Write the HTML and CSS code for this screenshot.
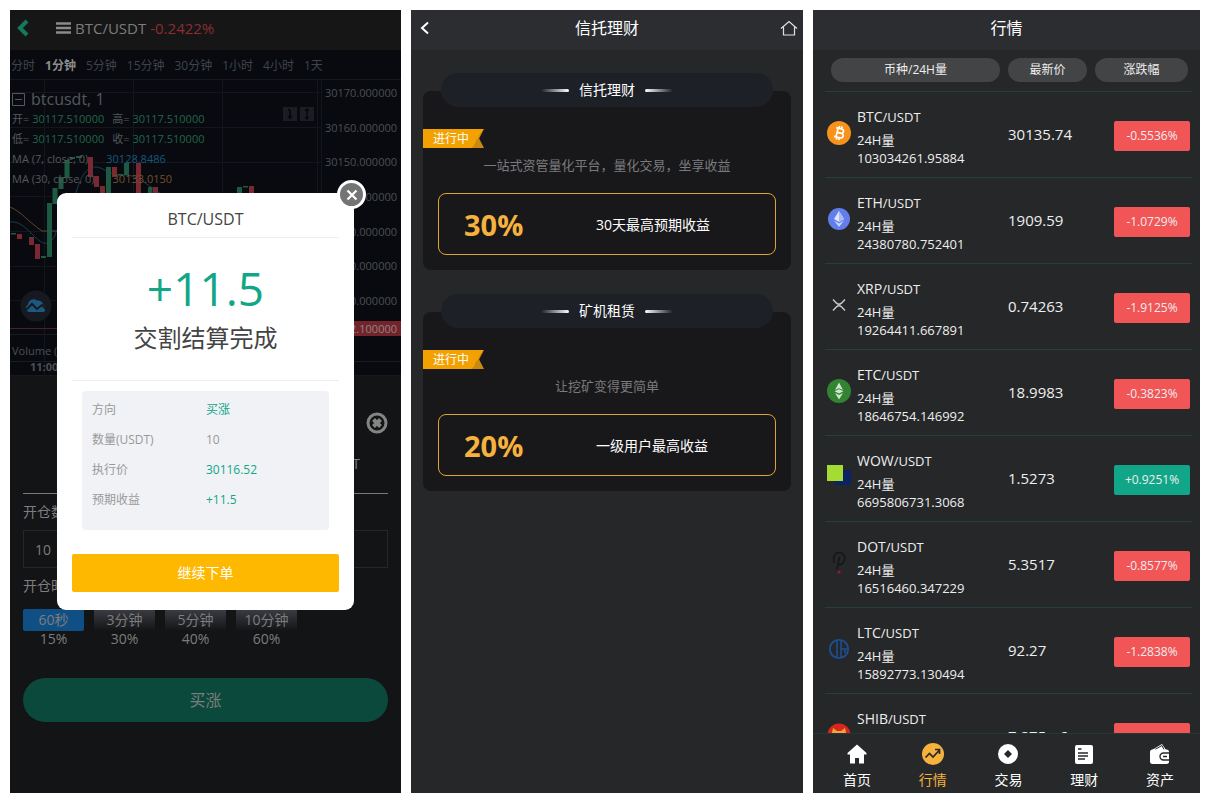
FILE: index.html
```
<!DOCTYPE html>
<html lang="zh-CN">
<head>
    <meta charset="UTF-8">
    <meta name="viewport" content="width=device-width, initial-scale=1.0">
    <title>行情</title>
    <link rel="stylesheet" href="styles.css">
</head>
<body>

    <main class="screens">

        <!-- Trade screen -->
        <section class="screen trade">
            <header class="trade-header">
                <button type="button" class="icon-button" aria-label="返回">
                    <svg width="14" height="18" viewBox="0 0 14 18"><path d="M11 2 4 9l7 7" fill="none" stroke="#137a5c" stroke-width="4"/></svg>
                </button>
                <button type="button" class="pair-button">
                    <svg width="15" height="12" viewBox="0 0 15 12"><path d="M0 1.5h15M0 6h15M0 10.5h15" stroke="#8b8b8b" stroke-width="2.6"/></svg>
                    <span>BTC/USDT</span>
                </button>
                <span class="change">-0.2422%</span>
            </header>

            <nav class="periods">
                <button type="button">分时</button>
                <button type="button" class="active">1分钟</button>
                <button type="button">5分钟</button>
                <button type="button">15分钟</button>
                <button type="button">30分钟</button>
                <button type="button">1小时</button>
                <button type="button">4小时</button>
                <button type="button">1天</button>
            </nav>

            <div class="chart">
                <svg class="chart-plot" viewBox="0 0 391 295" preserveAspectRatio="none">
                    <path d="M34.500 0V295M123.500 0V295M212.500 0V295M307.500 0V295M311.500 0V295M0 12.500H311M0 47.500H311M0 82.500H311M0 116.500H311M0 151.500H311M0 186.500H311M0 220.500H311" stroke="#14161d" fill="none"/>
                    <path d="M0 254.500H391M0 281.500H391" stroke="#191b21" fill="none"/>
                    <path d="M0 248.500H311" stroke="#4a1f25"/>
                    <path d="M0 127C12 132 16 140 32 151H50" fill="none" stroke="#5d472b"/>
                    <path d="M0 142c8-1 14 4 21 11s14 14 20 8 4-9 6-11M66 113c6-22 13-26 20-26s15 9 28 8c14 0 20 8 36 18" fill="none" stroke="#1b3d50"/>
                    <g fill="#1c5a41">
                        <rect x="1" y="153" width="5" height="1.500"/>
                        <rect x="19" y="157" width="5" height="1.500"/>
                        <rect x="31" y="176" width="5" height="2"/>
                        <rect x="37" y="123" width="5" height="54"/>
                        <rect x="42.500" y="108" width="5" height="16"/>
                        <rect x="48.500" y="97" width="5" height="12"/>
                        <rect x="54.500" y="80" width="5" height="18"/>
                        <rect x="60" y="77" width="5" height="2"/>
                        <rect x="66" y="76" width="6" height="2"/>
                        <rect x="96" y="87" width="5" height="27"/>
                        <rect x="108" y="94" width="5" height="1.500"/>
                        <rect x="114" y="83" width="5" height="12"/>
                        <rect x="138" y="107" width="4.500" height="7"/>
                        <rect x="227" y="107" width="5" height="7"/>
                        <rect x="233" y="106" width="5" height="1.500"/>
                    </g>
                    <g fill="#7a2831">
                        <rect x="7" y="154" width="5" height="5"/>
                        <rect x="19" y="158" width="5" height="7"/>
                        <rect x="25" y="164" width="5" height="15"/>
                        <rect x="78" y="77" width="5" height="20"/>
                        <rect x="84" y="96" width="5" height="11"/>
                        <rect x="90" y="106" width="5" height="8"/>
                        <rect x="102" y="87" width="5" height="10"/>
                        <rect x="126" y="83" width="5" height="31"/>
                        <rect x="143" y="107" width="5" height="7"/>
                        <rect x="239" y="106" width="5" height="8"/>
                    </g>
                </svg>

                <div class="legend">
                    <div class="legend-title">
                        <svg width="13" height="13" viewBox="0 0 13 13"><path d="M.5.5h12v12H.5zM3 6.500h7" fill="none" stroke="#55585c"/></svg>
                        <span>btcusdt, 1</span>
                    </div>
                    <div class="legend-row"><span>开= <b>30117.510000</b></span><span>高= <b>30117.510000</b></span></div>
                    <div class="legend-row"><span>低= <b>30117.510000</b></span><span>收= <b>30117.510000</b></span></div>
                    <div class="legend-row study"><span>MA (7, close, 0)</span><span class="ma-blue">30128.8486</span></div>
                    <div class="legend-row study"><span>MA (30, close, 0)</span><span class="ma-orange">30133.0150</span></div>
                </div>

                <div class="chart-tools">
                    <svg width="14" height="14" viewBox="0 0 14 14"><rect width="14" height="14" fill="#1b1d22"/><path d="M7 3v8M5 9l2 2 2-2M5 3h2" stroke="#07090e" stroke-width="2" fill="none"/></svg>
                    <svg width="14" height="14" viewBox="0 0 14 14"><rect width="14" height="14" fill="#1b1d22"/><path d="M7 2v10M5 4l2-2 2 2M5 10l2 2 2-2" stroke="#07090e" stroke-width="1.500" fill="none"/></svg>
                </div>

                <div class="price-axis">
                    <span>30170.000000</span>
                    <span>30160.000000</span>
                    <span>30150.000000</span>
                    <span>30140.000000</span>
                    <span>30130.000000</span>
                    <span>30120.000000</span>
                    <span>30110.000000</span>
                    <span class="last-price">30102.100000</span>
                </div>

                <svg class="chart-logo" width="32" height="32" viewBox="0 0 32 32">
                    <circle cx="16" cy="16" r="15.500" fill="#16191f"/>
                    <path d="M9 22a4 4 0 0 1-1-7.500 5.500 5.500 0 0 1 9-4 6 6 0 0 1 6.500 4.500A4 4 0 0 1 24 22z" fill="#1d5880"/>
                    <path d="m6 20 6-6 5 5 5-4 5 5" fill="none" stroke="#16191f" stroke-width="2"/>
                </svg>

                <div class="chart-foot">
                    <span>Volume (20)</span>
                    <time>11:00</time>
                </div>
            </div>

            <form class="order">
                <div class="order-top">
                    <button type="button" class="icon-button" aria-label="取消">
                        <svg width="22" height="22" viewBox="0 0 22 22"><circle cx="11" cy="11" r="9" fill="none" stroke="#848484" stroke-width="3"/><path d="m7.500 7.500 7 7m0-7-7 7" stroke="#848484" stroke-width="4"/></svg>
                    </button>
                </div>
                <p class="balance">余额: 0.00 USDT</p>
                <label for="amount">开仓数量</label>
                <input type="text" id="amount" value="10">
                <p class="field-label">开仓时间</p>
                <div class="durations">
                    <div class="duration active"><button type="button">60秒</button><span>15%</span></div>
                    <div class="duration"><button type="button">3分钟</button><span>30%</span></div>
                    <div class="duration"><button type="button">5分钟</button><span>40%</span></div>
                    <div class="duration"><button type="button">10分钟</button><span>60%</span></div>
                </div>
                <button type="submit" class="buy-button">买涨</button>
            </form>

            <div class="modal" role="dialog" aria-labelledby="modal-title">
                <button type="button" class="modal-close" aria-label="关闭">
                    <svg width="12" height="12" viewBox="0 0 12 12"><path d="m1.500 1.500 9 9m0-9-9 9" stroke="#fff" stroke-width="2.200"/></svg>
                </button>
                <h2 id="modal-title">BTC/USDT</h2>
                <div class="result">
                    <strong>+11.5</strong>
                    <p>交割结算完成</p>
                </div>
                <dl class="details">
                    <dt>方向</dt><dd class="up">买涨</dd>
                    <dt>数量(USDT)</dt><dd>10</dd>
                    <dt>执行价</dt><dd class="up">30116.52</dd>
                    <dt>预期收益</dt><dd class="up">+11.5</dd>
                </dl>
                <button type="button" class="continue-button">继续下单</button>
            </div>
        </section>

        <!-- Finance screen -->
        <section class="screen finance">
            <header class="title-bar">
                <button type="button" class="icon-button" aria-label="返回">
                    <svg width="10" height="14" viewBox="0 0 10 14"><path d="M8 1.500 2 7l6 5.500" fill="none" stroke="#fff" stroke-width="2"/></svg>
                </button>
                <h1>信托理财</h1>
                <a href="#" class="home-link" aria-label="首页">
                    <svg width="18" height="16" viewBox="0 0 18 16"><path d="M1 8.500 9 1.500l8 7M3.500 7v8h11V7" fill="none" stroke="#e2e2e2" stroke-width="1.200"/></svg>
                </a>
            </header>
            <div class="plans">
                <article class="plan">
                    <h2>信托理财</h2>
                    <div class="plan-body">
                        <span class="badge">进行中</span>
                        <p class="plan-text">一站式资管量化平台，量化交易，坐享收益</p>
                        <div class="rate"><strong>30%</strong><span>30天最高预期收益</span></div>
                    </div>
                </article>
                <article class="plan">
                    <h2>矿机租赁</h2>
                    <div class="plan-body">
                        <span class="badge">进行中</span>
                        <p class="plan-text">让挖矿变得更简单</p>
                        <div class="rate"><strong>20%</strong><span>一级用户最高收益</span></div>
                    </div>
                </article>
            </div>
        </section>

        <!-- Market screen -->
        <section class="screen market">
            <header class="title-bar">
                <h1>行情</h1>
            </header>
            <div class="market-list">
                <table>
                    <colgroup>
                        <col class="col-pair">
                        <col class="col-price">
                        <col class="col-change">
                    </colgroup>
                    <thead>
                        <tr>
                            <th><span>币种/24H量</span></th>
                            <th><span>最新价</span></th>
                            <th><span>涨跌幅</span></th>
                        </tr>
                    </thead>
                    <tbody>
                        <tr>
                            <td><div class="pair">
                                <svg width="24" height="24" viewBox="0 0 24 24"><circle cx="12" cy="12" r="12" fill="#f7931a"/><path d="M8 7.500h5.500c3.300 0 3.300 4.300 0 4.300H10.500h3.500c3.700 0 3.700 4.700 0 4.700H8M10 7.500v9M11 5v2.500M13.500 5v2.500M11 16.500V19M13.500 16.500V19" transform="rotate(14 12 12)" fill="none" stroke="#fff" stroke-width="1.700"/></svg>
                                <div><h3>BTC<small>/USDT</small></h3><p><i>24H量</i> 103034261.95884</p></div>
                            </div></td>
                            <td class="price">30135.74</td>
                            <td><span class="rate-tag">-0.5536%</span></td>
                        </tr>
                        <tr>
                            <td><div class="pair">
                                <svg width="24" height="24" viewBox="0 0 24 24"><circle cx="12" cy="12" r="11" fill="#627eea"/><path d="m12 4-5 8 5 3 5-3z" fill="#dfe5fc"/><path d="m12 4v11l5-3z" fill="#aab9f5"/><path d="m7 13.500 5 6.500 5-6.500-5 3z" fill="#cdd6fa"/></svg>
                                <div><h3>ETH<small>/USDT</small></h3><p><i>24H量</i> 24380780.752401</p></div>
                            </div></td>
                            <td class="price">1909.59</td>
                            <td><span class="rate-tag">-1.0729%</span></td>
                        </tr>
                        <tr>
                            <td><div class="pair">
                                <svg width="24" height="24" viewBox="0 0 24 24"><path d="M6 6.500l3.500 3.700q2.500 2 5 0L18 6.500M6 17.500l3.500-3.700q2.500-2 5 0l3.500 3.700" fill="none" stroke="#c8c8c8" stroke-width="1.500"/></svg>
                                <div><h3>XRP<small>/USDT</small></h3><p><i>24H量</i> 19264411.667891</p></div>
                            </div></td>
                            <td class="price">0.74263</td>
                            <td><span class="rate-tag">-1.9125%</span></td>
                        </tr>
                        <tr>
                            <td><div class="pair">
                                <svg width="24" height="24" viewBox="0 0 24 24"><circle cx="12" cy="12" r="12" fill="#328332"/><path d="m12 3.500-4 7.500 4-1.800 4 1.800zM12 10.200l-4.500 2L12 14.500l4.500-2.300zM8 14l4 6.500 4-6.500-4 2z" fill="#cfe6cf"/></svg>
                                <div><h3>ETC<small>/USDT</small></h3><p><i>24H量</i> 18646754.146992</p></div>
                            </div></td>
                            <td class="price">18.9983</td>
                            <td><span class="rate-tag">-0.3823%</span></td>
                        </tr>
                        <tr>
                            <td><div class="pair">
                                <svg width="24" height="24" viewBox="0 0 24 24"><path d="M8 5h16v15H8z" fill="#0b2265"/><path d="M0 0h16v16H0z" fill="#a5dc34"/></svg>
                                <div><h3>WOW<small>/USDT</small></h3><p><i>24H量</i> 6695806731.3068</p></div>
                            </div></td>
                            <td class="price">1.5273</td>
                            <td><span class="rate-tag up">+0.9251%</span></td>
                        </tr>
                        <tr>
                            <td><div class="pair">
                                <svg width="24" height="24" viewBox="0 0 24 24"><path d="M7 12C5.500 5 8.500 1 12.500 1.500S18.500 5 17.500 9s-4.500 5.500-6 4M10 18.500 12.500 6" fill="none" stroke="#161618" stroke-width="1.600"/><circle cx="12" cy="21" r="1.600" fill="#9a1047"/></svg>
                                <div><h3>DOT<small>/USDT</small></h3><p><i>24H量</i> 16516460.347229</p></div>
                            </div></td>
                            <td class="price">5.3517</td>
                            <td><span class="rate-tag">-0.8577%</span></td>
                        </tr>
                        <tr>
                            <td><div class="pair">
                                <svg width="24" height="24" viewBox="0 0 24 24"><circle cx="12" cy="12" r="9.200" fill="none" stroke="#1d4f93" stroke-width="1.800"/><path d="M10 3.500v17M14 3.500v17M14 12h6.500M18 12v4" fill="none" stroke="#1d4f93" stroke-width="1.600"/></svg>
                                <div><h3>LTC<small>/USDT</small></h3><p><i>24H量</i> 15892773.130494</p></div>
                            </div></td>
                            <td class="price">92.27</td>
                            <td><span class="rate-tag">-1.2838%</span></td>
                        </tr>
                        <tr>
                            <td><div class="pair">
                                <svg width="24" height="24" viewBox="0 0 24 24"><circle cx="12" cy="12" r="11.500" fill="#d7261c"/><path d="M4 14 6 5l4 3h4l4-3 2 9-3 6H7z" fill="#f2a238"/><path d="M9 13h6l-3 6z" fill="#fff"/></svg>
                                <div><h3>SHIB<small>/USDT</small></h3><p><i>24H量</i> 14480218.552310</p></div>
                            </div></td>
                            <td class="price">7.875e-6</td>
                            <td><span class="rate-tag">-1.1287%</span></td>
                        </tr>
                    </tbody>
                </table>
            </div>
            <nav class="tab-bar">
                <a href="#">
                    <svg width="22" height="22" viewBox="0 0 22 22"><path d="M11 1.500 1.500 10v1.500H4v9h5V15h4v5.500h5v-9h2.500V10z" fill="#fff"/></svg>
                    <span>首页</span>
                </a>
                <a href="#" class="active">
                    <svg width="22" height="22" viewBox="0 0 22 22"><circle cx="11" cy="11" r="11" fill="#f6b23c"/><path d="m3.500 14.500 4-4 3.500 3.500 6.500-7M13 6.500h4.500V11" fill="none" stroke="#27282a" stroke-width="1.700"/></svg>
                    <span>行情</span>
                </a>
                <a href="#">
                    <svg width="22" height="22" viewBox="0 0 22 22"><circle cx="11" cy="11" r="10" fill="#fff"/><path d="m11 7 4 4-4 4-4-4z" fill="#27282a"/></svg>
                    <span>交易</span>
                </a>
                <a href="#">
                    <svg width="22" height="22" viewBox="0 0 22 22"><rect x="2" y="2" width="18" height="19" rx="2" fill="#fff"/><path d="M5 6h3.500M5 10h10M5 13h10M5 16h7" stroke="#27282a" stroke-width="1.300"/></svg>
                    <span>理财</span>
                </a>
                <a href="#">
                    <svg width="22" height="22" viewBox="0 0 22 22"><path d="M3 7 13 1l4 6z" fill="#fff"/><path d="m6 6.500 7-4 2 4" fill="none" stroke="#27282a"/><rect x="1" y="6.500" width="19" height="14.500" rx="2.500" fill="#fff"/><path d="M21 10h-6.500a3.500 3.500 0 0 0 0 7H21M14 13.500h4" fill="none" stroke="#27282a" stroke-width="1.400"/></svg>
                    <span>资产</span>
                </a>
            </nav>
        </section>

    </main>

</body>
</html>
```

FILE: styles.css
```
:root {
    --green: #12a688;
    --red: #f15556;
    --gold: #f6b23c;
    --dim-text: #7d7d7e;
    --dim-green: #216548;
    --panel: #262729;
}

* {
    margin: 0;
    padding: 0;
    box-sizing: border-box;
}

body {
    background: #fff;
    padding: 10px;
    font-family: "Open Sans", "Noto Sans CJK SC", sans-serif;
    font-size: 14px;
    line-height: 20px;
}

button, input {
    font: inherit;
    color: inherit;
    border: none;
    background: none;
}

button {
    cursor: pointer;
}

svg {
    display: block;
    flex: none;
}

a {
    color: inherit;
    text-decoration: none;
}

.screens {
    display: grid;
    grid-template-columns: 391fr 392fr 387fr;
    gap: 10px;
    height: calc(100vh - 20px);
}

.screen {
    position: relative;
    display: flex;
    flex-direction: column;
    min-width: 0;
    min-height: 0;
    overflow: hidden;
    background: var(--panel);
    color: #fff;
}

/* Trade screen */
.trade {
    background: #131415;
    color: var(--dim-text);
}

.trade-header {
    display: flex;
    align-items: center;
    height: 40px;
    padding: 0 6px 4px;
    background: #161617;
    font-size: 15px;
}

.pair-button {
    display: flex;
    align-items: center;
    gap: 4px;
    margin-left: 26px;
}

.change {
    margin-left: 4px;
    color: #8e2c31;
}

.periods {
    display: flex;
    align-items: center;
    gap: 10px;
    height: 30px;
    padding: 2px 0 0 1px;
    background: #080a10;
    border-bottom: 1px solid #15171c;
    color: #3f444b;
    font-size: 12px;
    white-space: nowrap;
}

.periods .active {
    color: #8d8d8b;
    font-weight: bold;
}

.chart {
    position: relative;
    display: flex;
    flex-direction: column;
    justify-content: space-between;
    height: 296px;
    background: #080a10;
    border-bottom: 1px solid #17191c;
    font-size: 11px;
    color: #4c4f53;
}

.chart-plot {
    position: absolute;
    inset: 0;
    width: 100%;
    height: 100%;
}

.legend {
    position: relative;
    padding: 9px 0 0 2px;
    color: #55585b;
}

.legend-title {
    display: flex;
    align-items: center;
    gap: 6px;
    font-size: 16px;
}

.legend-row {
    display: flex;
    gap: 8px;
    white-space: nowrap;
}

.legend-row b {
    color: var(--dim-green);
    font-weight: normal;
}

.study {
    gap: 18px;
}

.ma-blue {
    color: #17577f;
}

.ma-orange {
    color: #75502a;
}

.chart-tools {
    position: absolute;
    top: 27px;
    right: 87px;
    display: flex;
    gap: 3px;
}

.price-axis {
    position: absolute;
    top: 5px;
    right: 0;
    display: flex;
    flex-direction: column;
    justify-content: space-between;
    height: 223px;
    text-align: right;
    line-height: 15px;
}

.price-axis span {
    padding: 0 4px;
}

.price-axis .last-price {
    position: absolute;
    top: 236px;
    right: 0;
    background: #73242b;
    color: #8f8386;
}

.chart-logo {
    position: absolute;
    top: 210px;
    left: 10px;
}

.chart-foot {
    position: relative;
    display: flex;
    flex-direction: column;
    padding: 0 2px;
    line-height: 16px;
}

.chart-foot time {
    padding-left: 18px;
    font-weight: bold;
}

.order {
    display: flex;
    flex-direction: column;
    padding: 36px 13px 0;
}

.order-top {
    display: flex;
    justify-content: flex-end;
}

.balance {
    padding: 20px 28px 19px 0;
    border-bottom: 1px solid #77787a;
    text-align: right;
}

.order label, .field-label {
    padding: 8px 0;
}

.order input {
    height: 38px;
    padding: 0 11px;
    border: 1px solid #25272b;
}

.durations {
    display: flex;
    gap: 10px;
    margin-top: 5px;
}

.duration {
    display: flex;
    flex-direction: column;
    width: 61px;
    text-align: center;
    line-height: 16px;
}

.duration button {
    height: 22px;
    background: linear-gradient(#3c3d45, #131415);
}

.duration.active button {
    background: #104f84;
    border-radius: 2px;
}

.buy-button {
    height: 44px;
    margin-top: 31px;
    border-radius: 22px;
    background: #0a493b;
    font-size: 16px;
}

.icon-button {
    display: flex;
    align-items: center;
}

.modal {
    position: absolute;
    top: 183px;
    left: 12%;
    right: 12%;
    padding: 14px 15px 18px;
    border-radius: 9px;
    background: #fff;
    color: #444;
    text-align: center;
}

.modal h2 {
    padding-bottom: 6px;
    font-size: 16px;
    line-height: 24px;
    font-weight: normal;
}

.modal-close {
    position: absolute;
    top: -13px;
    right: -12px;
    display: flex;
    align-items: center;
    justify-content: center;
    width: 29px;
    height: 29px;
    border: 3px solid #fff;
    border-radius: 50%;
    background: #747474;
}

.result {
    padding: 20px 0 22px;
    border-top: 1px solid #eee;
    border-bottom: 1px solid #eee;
}

.result strong {
    display: block;
    color: var(--green);
    font-size: 46px;
    line-height: 60px;
    font-weight: normal;
}

.result p {
    font-size: 24px;
    line-height: 40px;
}

.details {
    display: grid;
    grid-template-columns: 114px 1fr;
    margin: 10px 10px 24px;
    padding: 4px 10px 15px;
    border-radius: 4px;
    background: #f1f2f6;
    color: #999;
    font-size: 12px;
    line-height: 30px;
    text-align: left;
}

.details .up {
    color: var(--green);
}

.continue-button {
    width: 100%;
    height: 38px;
    border-radius: 2px;
    background: #ffb800;
    color: #fff;
}

/* Shared title bar */
.title-bar {
    display: flex;
    align-items: center;
    justify-content: center;
    flex: none;
    height: 40px;
    padding: 0 5px 4px;
    background: #2c2d31;
}

.title-bar h1 {
    flex: 1;
    font-size: 16px;
    font-weight: normal;
    text-align: center;
}

.title-bar .icon-button {
    width: 18px;
    padding-left: 4px;
}

/* Finance screen */
.plans {
    display: flex;
    flex-direction: column;
    gap: 24px;
    padding: 23px 12px;
}

.plan h2 {
    position: relative;
    display: flex;
    align-items: center;
    justify-content: center;
    gap: 10px;
    height: 34px;
    margin: 0 18px -16px;
    border-radius: 17px;
    background: #1d2027;
    font-size: 14px;
    font-weight: normal;
}

.plan h2::before, .plan h2::after {
    content: "";
    width: 28px;
    height: 3px;
    border-radius: 2px;
    background: linear-gradient(to right, transparent, #fff);
}

.plan h2::after {
    background: linear-gradient(to left, transparent, #fff);
}

.plan-body {
    padding: 38px 0 15px;
    border-radius: 8px;
    background: #18181b;
}

.badge {
    display: block;
    width: 61px;
    padding-left: 10px;
    background: linear-gradient(120deg, #f2a100 52px, #c88910 52px);
    clip-path: polygon(0 0, 100% 0, 92% 50%, 100% 100%, 0 100%);
    font-size: 12px;
    line-height: 19px;
}

.plan-text {
    padding: 7px 0 18px;
    color: #7b7b7d;
    font-size: 13px;
    text-align: center;
}

.rate {
    display: grid;
    grid-template-columns: 132px 1fr;
    align-items: center;
    height: 62px;
    margin: 0 15px;
    padding: 2px 0 0 25px;
    border: 1px solid #e0a52f;
    border-radius: 8px;
}

.rate strong {
    color: var(--gold);
    font-size: 29px;
}

/* Market screen */
.market-list {
    flex: 1;
    min-height: 0;
    overflow: hidden;
    padding: 0 8px 0 12px;
    color: #eee;
}

.market table {
    width: 100%;
    table-layout: fixed;
    border-collapse: collapse;
}

.col-pair {
    width: 179px;
}

.col-change {
    width: 101px;
}

.market tr {
    border-bottom: 1px solid #21403f;
}

.market th {
    height: 41px;
    padding: 8px 4px;
    font-size: 12px;
    font-weight: normal;
}

.market th:first-child {
    padding-left: 6px;
}

.market th span {
    display: block;
    border-radius: 12px;
    background: #434446;
    line-height: 24px;
}

.market td {
    height: 86px;
    vertical-align: middle;
}

.pair {
    display: flex;
    gap: 6px;
    padding: 4px 0 0 2px;
}

.pair svg {
    margin-top: 16px;
}

.pair h3 {
    font-size: 14px;
    line-height: 24px;
    font-weight: normal;
}

.pair small {
    font-size: 13px;
}

.pair p {
    width: 120px;
    margin-top: 2px;
    font-size: 13px;
    line-height: 18px;
}

.pair i {
    display: block;
    font-style: normal;
}

.market .price {
    padding-left: 4px;
    font-size: 15px;
}

.rate-tag {
    display: block;
    width: 76px;
    margin: 4px 2px 0 auto;
    border-radius: 2px;
    background: var(--red);
    font-size: 12px;
    line-height: 30px;
    text-align: center;
}

.rate-tag.up {
    background: var(--green);
}

.tab-bar {
    display: flex;
    flex: none;
    height: 60px;
    padding: 9px 2px 0 6px;
    border-top: 1px solid #22383a;
    background: #27282a;
}

.tab-bar a {
    display: flex;
    flex: 1;
    flex-direction: column;
    align-items: center;
    gap: 5px;
}

.tab-bar .active {
    color: var(--gold);
}
```
